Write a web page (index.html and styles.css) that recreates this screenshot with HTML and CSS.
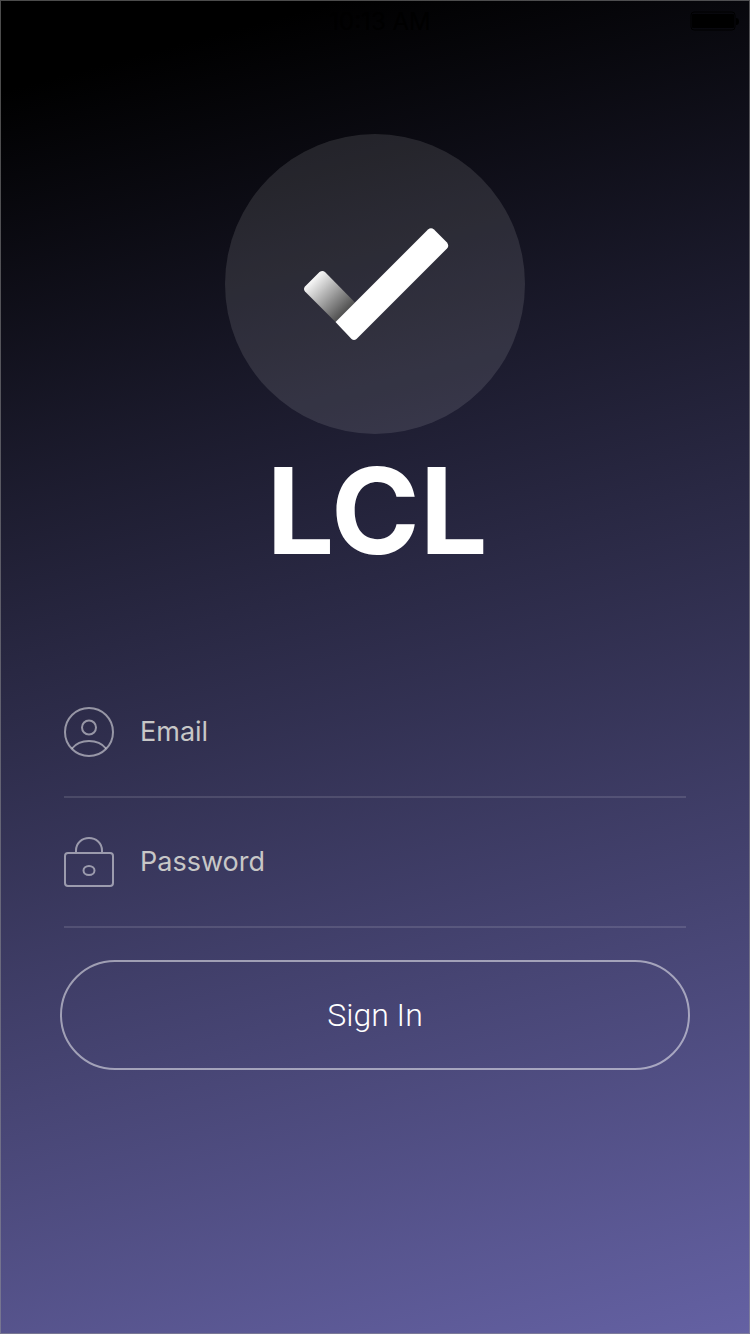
FILE: index.html
```html
<!DOCTYPE html>
<html lang="en">
<head>
<meta charset="utf-8">
<meta name="viewport" content="width=device-width, initial-scale=1">
<title>LCL</title>
<link rel="stylesheet" href="styles.css">
</head>
<body>
<div class="screen">
  <header class="status">
    <span class="time">10:13 AM</span>
    <svg class="battery" width="50" height="20" viewBox="0 0 50 20" aria-hidden="true">
      <rect x="1" y="1" width="44" height="18" rx="3" fill="none" stroke="#000"/>
      <rect x="2" y="3" width="42" height="14" rx="1"/>
      <path d="M46 7q3 0 3 3.500t-3 3.500z"/>
    </svg>
  </header>
  <main class="content">
    <div class="logo">
      <svg width="300" height="300" viewBox="0 0 300 300" aria-hidden="true">
        <defs>
          <linearGradient id="fold" gradientUnits="userSpaceOnUse" x1="87" y1="145" x2="121" y2="179">
            <stop offset="0" stop-color="#fafafa"/>
            <stop offset="1" stop-color="#4c4c4c"/>
          </linearGradient>
        </defs>
        <path fill="url(#fold)" d="M80 157.500Q78 155 80 152.500L94.500 138Q97.500 136 100 138L130 168.500L110.500 188z"/>
        <path fill="#fff" d="M110.500 188L203 95.500Q206 93 209 95.500L222 108.500Q224.500 112 222 114.500L131.500 205Q129 207 126.500 205z"/>
      </svg>
    </div>
    <h1 class="title">LCL</h1>
    <form class="form">
      <label class="field">
        <svg class="icon" width="50" height="50" viewBox="0 0 50 50" aria-hidden="true">
          <circle cx="25" cy="25" r="24"/>
          <circle cx="25" cy="20.500" r="7"/>
          <path d="M8 41.500Q14 34 25 34T42 41.500"/>
        </svg>
        <input class="input" type="email" placeholder="Email" aria-label="Email">
      </label>
      <label class="field">
        <svg class="icon" width="50" height="50" viewBox="0 0 50 50" aria-hidden="true">
          <rect x="1" y="16" width="48" height="33" rx="3"/>
          <path d="M12 15V13.500C12 6 18 1 25 1S38 6 38 13.500V15"/>
          <ellipse cx="25" cy="33.500" rx="5.500" ry="4.500"/>
        </svg>
        <input class="input" type="password" placeholder="Password" aria-label="Password">
      </label>
      <button class="submit" type="button">Sign In</button>
    </form>
  </main>
</div>
</body>
</html>
```
FILE: styles.css
```css
* {
  box-sizing: border-box;
}

body {
  margin: 0;
  font-family: Inter, "Liberation Sans", sans-serif;
}

.screen {
  display: flex;
  flex-direction: column;
  min-height: 100vh;
  border: 1px solid rgba(151, 151, 151, 0.5);
  background: linear-gradient(165deg, #000 6%, #292843 44%, #6461a3 100%) border-box;
}

.status {
  display: grid;
  grid-template-columns: 1fr auto 1fr;
  align-items: center;
  height: 40px;
  padding: 0 9px 0 19px;
  color: #000;
}

.time {
  grid-column: 2;
  font-size: 24px;
}

.battery {
  justify-self: end;
}

.content {
  display: flex;
  flex-direction: column;
  align-items: center;
  padding: 93px 59px 40px;
}

.logo {
  width: 300px;
  height: 300px;
  border-radius: 50%;
  background: rgba(255, 255, 255, 0.11);
}

.title {
  margin: 2px 0 0;
  padding-left: 4px;
  color: #fff;
  font-size: 120px;
  font-weight: 700;
  line-height: 150px;
}

.form {
  display: flex;
  flex-direction: column;
  width: 100%;
  margin-top: 82px;
}

.field {
  display: flex;
  align-items: center;
  gap: 26px;
  height: 130px;
  margin: 0 4px;
  border-bottom: 2px solid rgba(255, 255, 255, 0.12);
}

.icon {
  flex: none;
  fill: none;
  stroke: rgba(255, 255, 255, 0.5);
  stroke-width: 2;
}

.input {
  flex: 1;
  min-width: 0;
  padding: 0;
  border: 0;
  outline: 0;
  background: none;
  color: #fff;
  font: 400 27px/40px Inter, sans-serif;
}

.input::placeholder {
  color: #c7c7c7;
  opacity: 1;
}

.submit {
  height: 110px;
  margin-top: 32px;
  border: 2px solid rgba(255, 255, 255, 0.5);
  border-radius: 55px;
  background: none;
  color: #fff;
  font: 300 32px/40px Roboto, sans-serif;
  cursor: pointer;
}
```
